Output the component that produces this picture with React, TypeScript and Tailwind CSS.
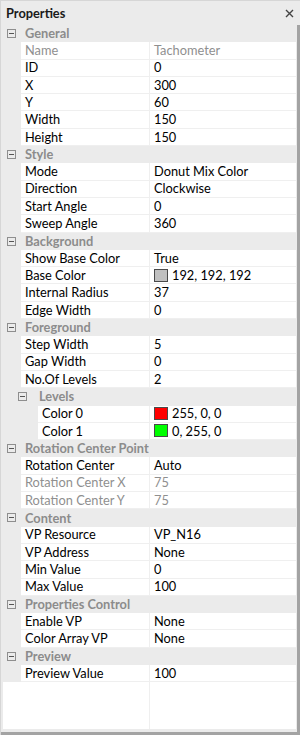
import * as React from "react";

type Item =
  | { kind: "group"; label: string; level?: number }
  | { kind: "prop"; name: string; value: string; disabled?: boolean; swatch?: string; level?: number };

const items: Item[] = [
  { kind: "group", label: "General" },
  { kind: "prop", name: "Name", value: "Tachometer", disabled: true },
  { kind: "prop", name: "ID", value: "0" },
  { kind: "prop", name: "X", value: "300" },
  { kind: "prop", name: "Y", value: "60" },
  { kind: "prop", name: "Width", value: "150" },
  { kind: "prop", name: "Height", value: "150" },
  { kind: "group", label: "Style" },
  { kind: "prop", name: "Mode", value: "Donut Mix Color" },
  { kind: "prop", name: "Direction", value: "Clockwise" },
  { kind: "prop", name: "Start Angle", value: "0" },
  { kind: "prop", name: "Sweep Angle", value: "360" },
  { kind: "group", label: "Background" },
  { kind: "prop", name: "Show Base Color", value: "True" },
  { kind: "prop", name: "Base Color", value: "192, 192, 192", swatch: "#c0c0c0" },
  { kind: "prop", name: "Internal Radius", value: "37" },
  { kind: "prop", name: "Edge Width", value: "0" },
  { kind: "group", label: "Foreground" },
  { kind: "prop", name: "Step Width", value: "5" },
  { kind: "prop", name: "Gap Width", value: "0" },
  { kind: "prop", name: "No.Of Levels", value: "2" },
  { kind: "group", label: "Levels", level: 1 },
  { kind: "prop", name: "Color 0", value: "255, 0, 0", swatch: "#ff0000", level: 1 },
  { kind: "prop", name: "Color 1", value: "0, 255, 0", swatch: "#00ff00", level: 1 },
  { kind: "group", label: "Rotation Center Point" },
  { kind: "prop", name: "Rotation Center", value: "Auto" },
  { kind: "prop", name: "Rotation Center X", value: "75", disabled: true },
  { kind: "prop", name: "Rotation Center Y", value: "75", disabled: true },
  { kind: "group", label: "Content" },
  { kind: "prop", name: "VP Resource", value: "VP_N16" },
  { kind: "prop", name: "VP Address", value: "None" },
  { kind: "prop", name: "Min Value", value: "0" },
  { kind: "prop", name: "Max Value", value: "100" },
  { kind: "group", label: "Properties Control" },
  { kind: "prop", name: "Enable VP", value: "None" },
  { kind: "prop", name: "Color Array VP", value: "None" },
  { kind: "group", label: "Preview" },
  { kind: "prop", name: "Preview Value", value: "100" },
];

function Collapse() {
  return (
    <svg width="9" height="9" viewBox="0 0 9 9" className="shrink-0">
      <rect x="0.5" y="0.5" width="8" height="8" fill="none" stroke="#8e8e8e" />
      <line x1="2" y1="4.5" x2="7" y2="4.5" stroke="#555" />
    </svg>
  );
}

function GroupRow({ label, level = 0 }: { label: string; level?: number }) {
  return (
    <div className="flex items-center h-[17.3px] bg-[#ebebeb]">
      <div className={level ? "w-[29px] shrink-0 flex justify-end pr-[3px]" : "w-[20px] shrink-0 flex justify-center pl-px"}>
        <Collapse />
      </div>
      <span className={level ? "pl-[9px] font-bold text-[#8c8c8c]" : "pl-[4px] font-bold text-[#8c8c8c]"}>{label}</span>
    </div>
  );
}

function PropRow({ name, value, disabled, swatch, level = 0 }: Extract<Item, { kind: "prop" }>) {
  const text = disabled ? "text-[#8f8f8f]" : "text-black";
  return (
    <div className="flex h-[17.3px] pr-[1px]">
      <div className={level ? "w-[37px] shrink-0" : "w-[20px] shrink-0"} />
      <div className={`flex-1 flex items-center pl-[4px] bg-white border-b border-r border-[#efefef] ${text}`}>
        {name}
      </div>
      <div className={`w-[146px] shrink-0 flex items-center pl-[4px] bg-white border-b border-[#efefef] ${text}`}>
        {swatch && (
          <span className="w-[14px] h-[13px] border border-[#4a4a4a] mr-[4px]" style={{ background: swatch }} />
        )}
        {value}
      </div>
    </div>
  );
}

export default function App() {
  return (
    <div
      className="w-[300px] h-[735px] flex flex-col bg-[#ebebeb] border-l border-t border-[#d6d6d6] text-[12.8px] leading-none"
      style={{ fontFamily: "Lato, 'Noto Sans', sans-serif" }}
    >
      <div className="h-[24px] shrink-0 flex items-center justify-between pl-[5px] pr-[6px]">
        <span className="font-bold text-[#1a1a1a]">Properties</span>
        <svg width="9" height="9" viewBox="0 0 9 9">
          <path d="M1 1L8 8M8 1L1 8" stroke="#444" strokeWidth="1.4" />
        </svg>
      </div>
      <div className="flex-1 flex flex-col border-r-[3px] border-b-[3px] border-[#a3a3a3]">
        {items.map((it, i) =>
          it.kind === "group" ? (
            <GroupRow key={i} label={it.label} level={it.level} />
          ) : (
            <PropRow key={i} {...it} />
          )
        )}
        <div className="flex-1 flex pl-[2px] pr-[1px] pb-[3px]">
          <div className="flex-1 bg-white border-r border-[#efefef]" />
          <div className="w-[146px] bg-white" />
        </div>
      </div>
    </div>
  );
}
